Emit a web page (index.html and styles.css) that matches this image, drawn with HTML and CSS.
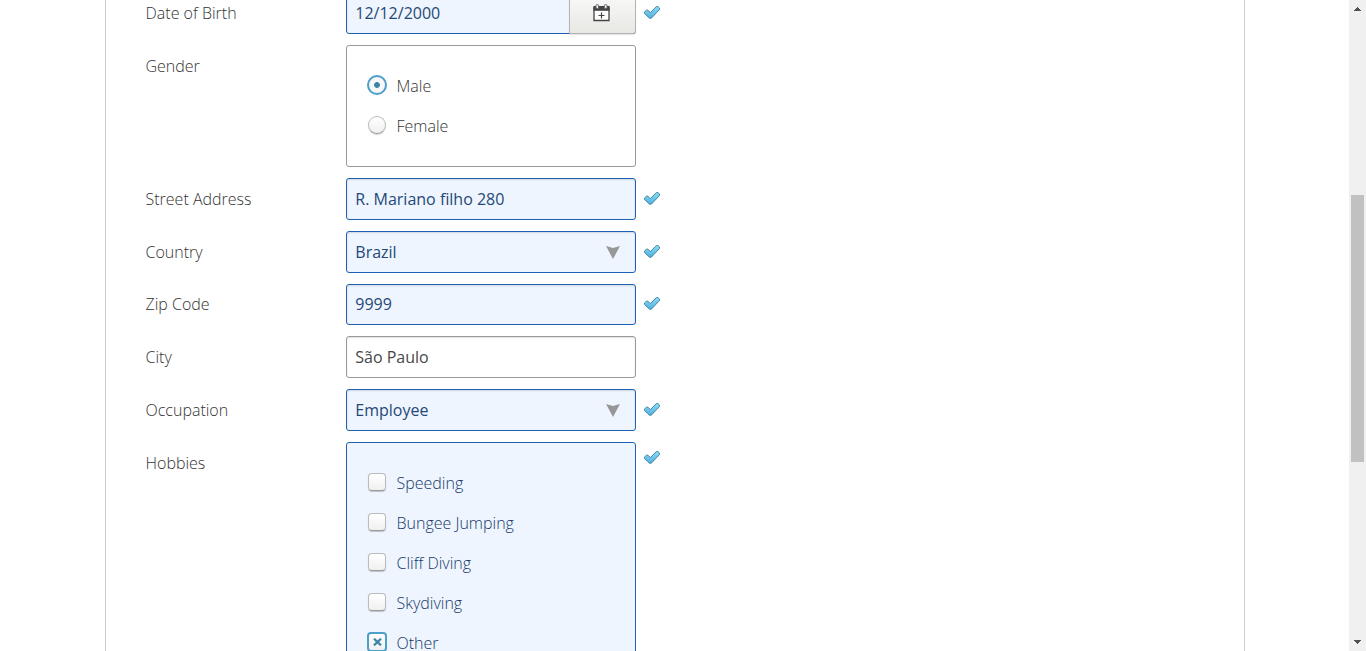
FILE: index.html
```
<!DOCTYPE html>
<html lang="en">
<head>
<meta charset="utf-8">
<title>Personal details</title>
<link rel="stylesheet" href="styles.css">
</head>
<body>
<svg class="defs" width="0" height="0" aria-hidden="true">
  <defs>
    <linearGradient id="tick-fill" x1="0" y1="0" x2="0" y2="1">
      <stop offset="0" stop-color="#8bdcf5"/><stop offset="1" stop-color="#4fb0de"/>
    </linearGradient>
    <symbol id="tick" viewBox="0 0 16 13">
      <path d="M.5 6 2.5 4.2H4l2.3 2.5L12.3.6h1.6l1.6 1.4v1.5L7.3 12.2H5.5L.5 7.4z" fill="url(#tick-fill)" stroke="#4286a6" stroke-width="1" stroke-linejoin="round"/>
    </symbol>
    <symbol id="arrow" viewBox="0 0 14 13">
      <path d="M0 0 7 2 14 0 7 13z" fill="#979797"/>
    </symbol>
  </defs>
</svg>
<div class="viewport">
  <main class="page">
    <form class="panel">
      <div class="row">
        <span class="label">Date of Birth</span>
        <div class="field valid date"><span class="value">12/12/2000</span>
          <span class="date-button"><svg width="17" height="18" viewBox="0 0 17 18"><path d="M1 4h15v12.5H1z" fill="#fff" stroke="#444" stroke-width="1.3"/><path d="M.4 2h16.2v4.8H.4z" fill="#444"/><path d="M3 4.5V1.6q0-1 1.3-1t1.3 1v2.9zM11.4 4.5V1.6q0-1 1.3-1t1.3 1v2.9z" fill="#eee" stroke="#666"/><path d="M8.5 8.5v6M5.5 11.5h6" stroke="#444" stroke-width="1.2"/></svg></span>
        </div>
        <svg class="tick"><use href="#tick"/></svg>
      </div>
      <div class="row">
        <span class="label">Gender</span>
        <div class="group">
          <div class="option"><i class="radio selected"></i>Male</div>
          <div class="option"><i class="radio"></i>Female</div>
        </div>
      </div>
      <div class="row">
        <span class="label">Street Address</span>
        <div class="field valid"><span class="value">R. Mariano filho 280</span></div>
        <svg class="tick"><use href="#tick"/></svg>
      </div>
      <div class="row">
        <span class="label">Country</span>
        <div class="field valid select"><span class="value">Brazil</span><svg class="arrow"><use href="#arrow"/></svg></div>
        <svg class="tick"><use href="#tick"/></svg>
      </div>
      <div class="row short">
        <span class="label">Zip Code</span>
        <div class="field valid"><span class="value">9999</span></div>
        <svg class="tick"><use href="#tick"/></svg>
      </div>
      <div class="row">
        <span class="label">City</span>
        <div class="field"><span class="value">São Paulo</span></div>
      </div>
      <div class="row">
        <span class="label">Occupation</span>
        <div class="field valid select"><span class="value">Employee</span><svg class="arrow"><use href="#arrow"/></svg></div>
        <svg class="tick"><use href="#tick"/></svg>
      </div>
      <div class="row hobbies">
        <span class="label">Hobbies</span>
        <div class="group valid">
          <div class="option"><i class="check"></i>Speeding</div>
          <div class="option"><i class="check"></i>Bungee Jumping</div>
          <div class="option"><i class="check"></i>Cliff Diving</div>
          <div class="option"><i class="check"></i>Skydiving</div>
          <div class="option"><i class="check selected"><svg width="9" height="8" viewBox="0 0 9 8"><path d="M1 .7 8 7.3M8 .7 1 7.3" stroke="#3b85a8" stroke-width="2.3"/></svg></i>Other</div>
        </div>
        <svg class="tick"><use href="#tick"/></svg>
      </div>
    </form>
  </main>
  <aside class="scrollbar">
    <svg width="7" height="4" viewBox="0 0 7 4" shape-rendering="crispEdges"><path d="M3 0h1v1h1v1h1v1h1v1H0V3h1V2h1V1h1z" fill="#505050"/></svg>
    <div class="track"><div class="thumb"></div></div>
    <svg width="7" height="4" viewBox="0 0 7 4" shape-rendering="crispEdges"><path d="M0 0h7v1H6v1H5v1H4v1H3V3H2V2H1V1H0z" fill="#505050"/></svg>
  </aside>
</div>
</body>
</html>
```
FILE: styles.css
```
* { box-sizing: border-box; }
body {
  margin: 0;
  overflow: hidden;
  background: #fff;
  font: 300 16px/24px "Open Sans", sans-serif;
  color: #333;
}
.defs { display: block; }
.viewport { display: flex; height: 651px; overflow: hidden; }
.page { flex: 1; padding: 0 104px 0 105px; overflow: hidden; }
.panel {
  display: flex;
  flex-direction: column;
  gap: 11px;
  margin-top: -8px;
  padding: 0 39.5px;
  border: solid #ccc;
  border-width: 0 1px;
}
.row { display: grid; grid-template-columns: 200.5px 290px 16px; align-items: start; flex: none; }
.label { padding-top: 9px; }
.field {
  display: flex;
  align-items: center;
  height: 42px;
  padding: 0 9px 0 8.3px;
  border: 1px solid #999;
  border-radius: 3px;
  background: #fff;
  box-shadow: inset 0 1px 2px rgba(0, 0, 0, .13);
  font-weight: 400;
  color: #474747;
}
.short .field { height: 41px; padding-bottom: 1px; }
.short .label { padding-top: 8px; }
.valid { border-color: #1d62b0; background: #eef5fe; color: #254878; }
.value { flex: 1; }
.date { padding-right: 0; }
.date-button {
  display: flex;
  align-items: center;
  justify-content: center;
  width: 67px;
  height: 42px;
  margin: -1px -1px -1px 0;
  padding: 0 3px 0 0;
  border: 1px solid #b3b3b3;
  border-radius: 0 3px 3px 0;
  background: linear-gradient(#fafafa, #e7e7e4);
  box-shadow: 0 1px 1px rgba(0, 0, 0, .12);
}
.arrow { width: 14px; height: 13px; margin-right: 6px; }
.tick { width: 16px; height: 13px; margin: 14px 0 0 8px; }
.short .tick { margin-top: 13px; }
.hobbies .tick { margin-top: 9px; }
.group { padding: 20px; border: 1px solid #999; border-radius: 3px; }
.group.valid { border-color: #1d62b0; color: #17386a; }
.option { display: flex; align-items: center; height: 40px; }
.radio, .check {
  display: flex;
  align-items: center;
  justify-content: center;
  flex: none;
  width: 18px;
  height: 18px;
  margin: 0 10.5px 2px 1px;
  border: 1px solid #bbb;
  border-bottom-color: #999;
  background: linear-gradient(#fff, #f0f0f0);
  box-shadow: 0 1px 1px rgba(0, 0, 0, .2);
}
.radio { border-radius: 50%; }
.check { border-radius: 4px; }
.selected {
  width: 20px;
  height: 20px;
  margin: 0 9.5px 2px 0;
  border: 2px solid #4b9fca;
  box-shadow: none;
}
.radio.selected { background: radial-gradient(circle, #3b85a8 2.5px, #f7f7f7 3.3px); }
.scrollbar {
  display: flex;
  flex-direction: column;
  align-items: center;
  width: 17px;
  padding: 7px 1px 7px 0;
  background: #f0f0f0;
}
.track { flex: 1; width: 13px; padding-top: 184px; }
.thumb { height: 267px; background: #c1c1c1; }
```
